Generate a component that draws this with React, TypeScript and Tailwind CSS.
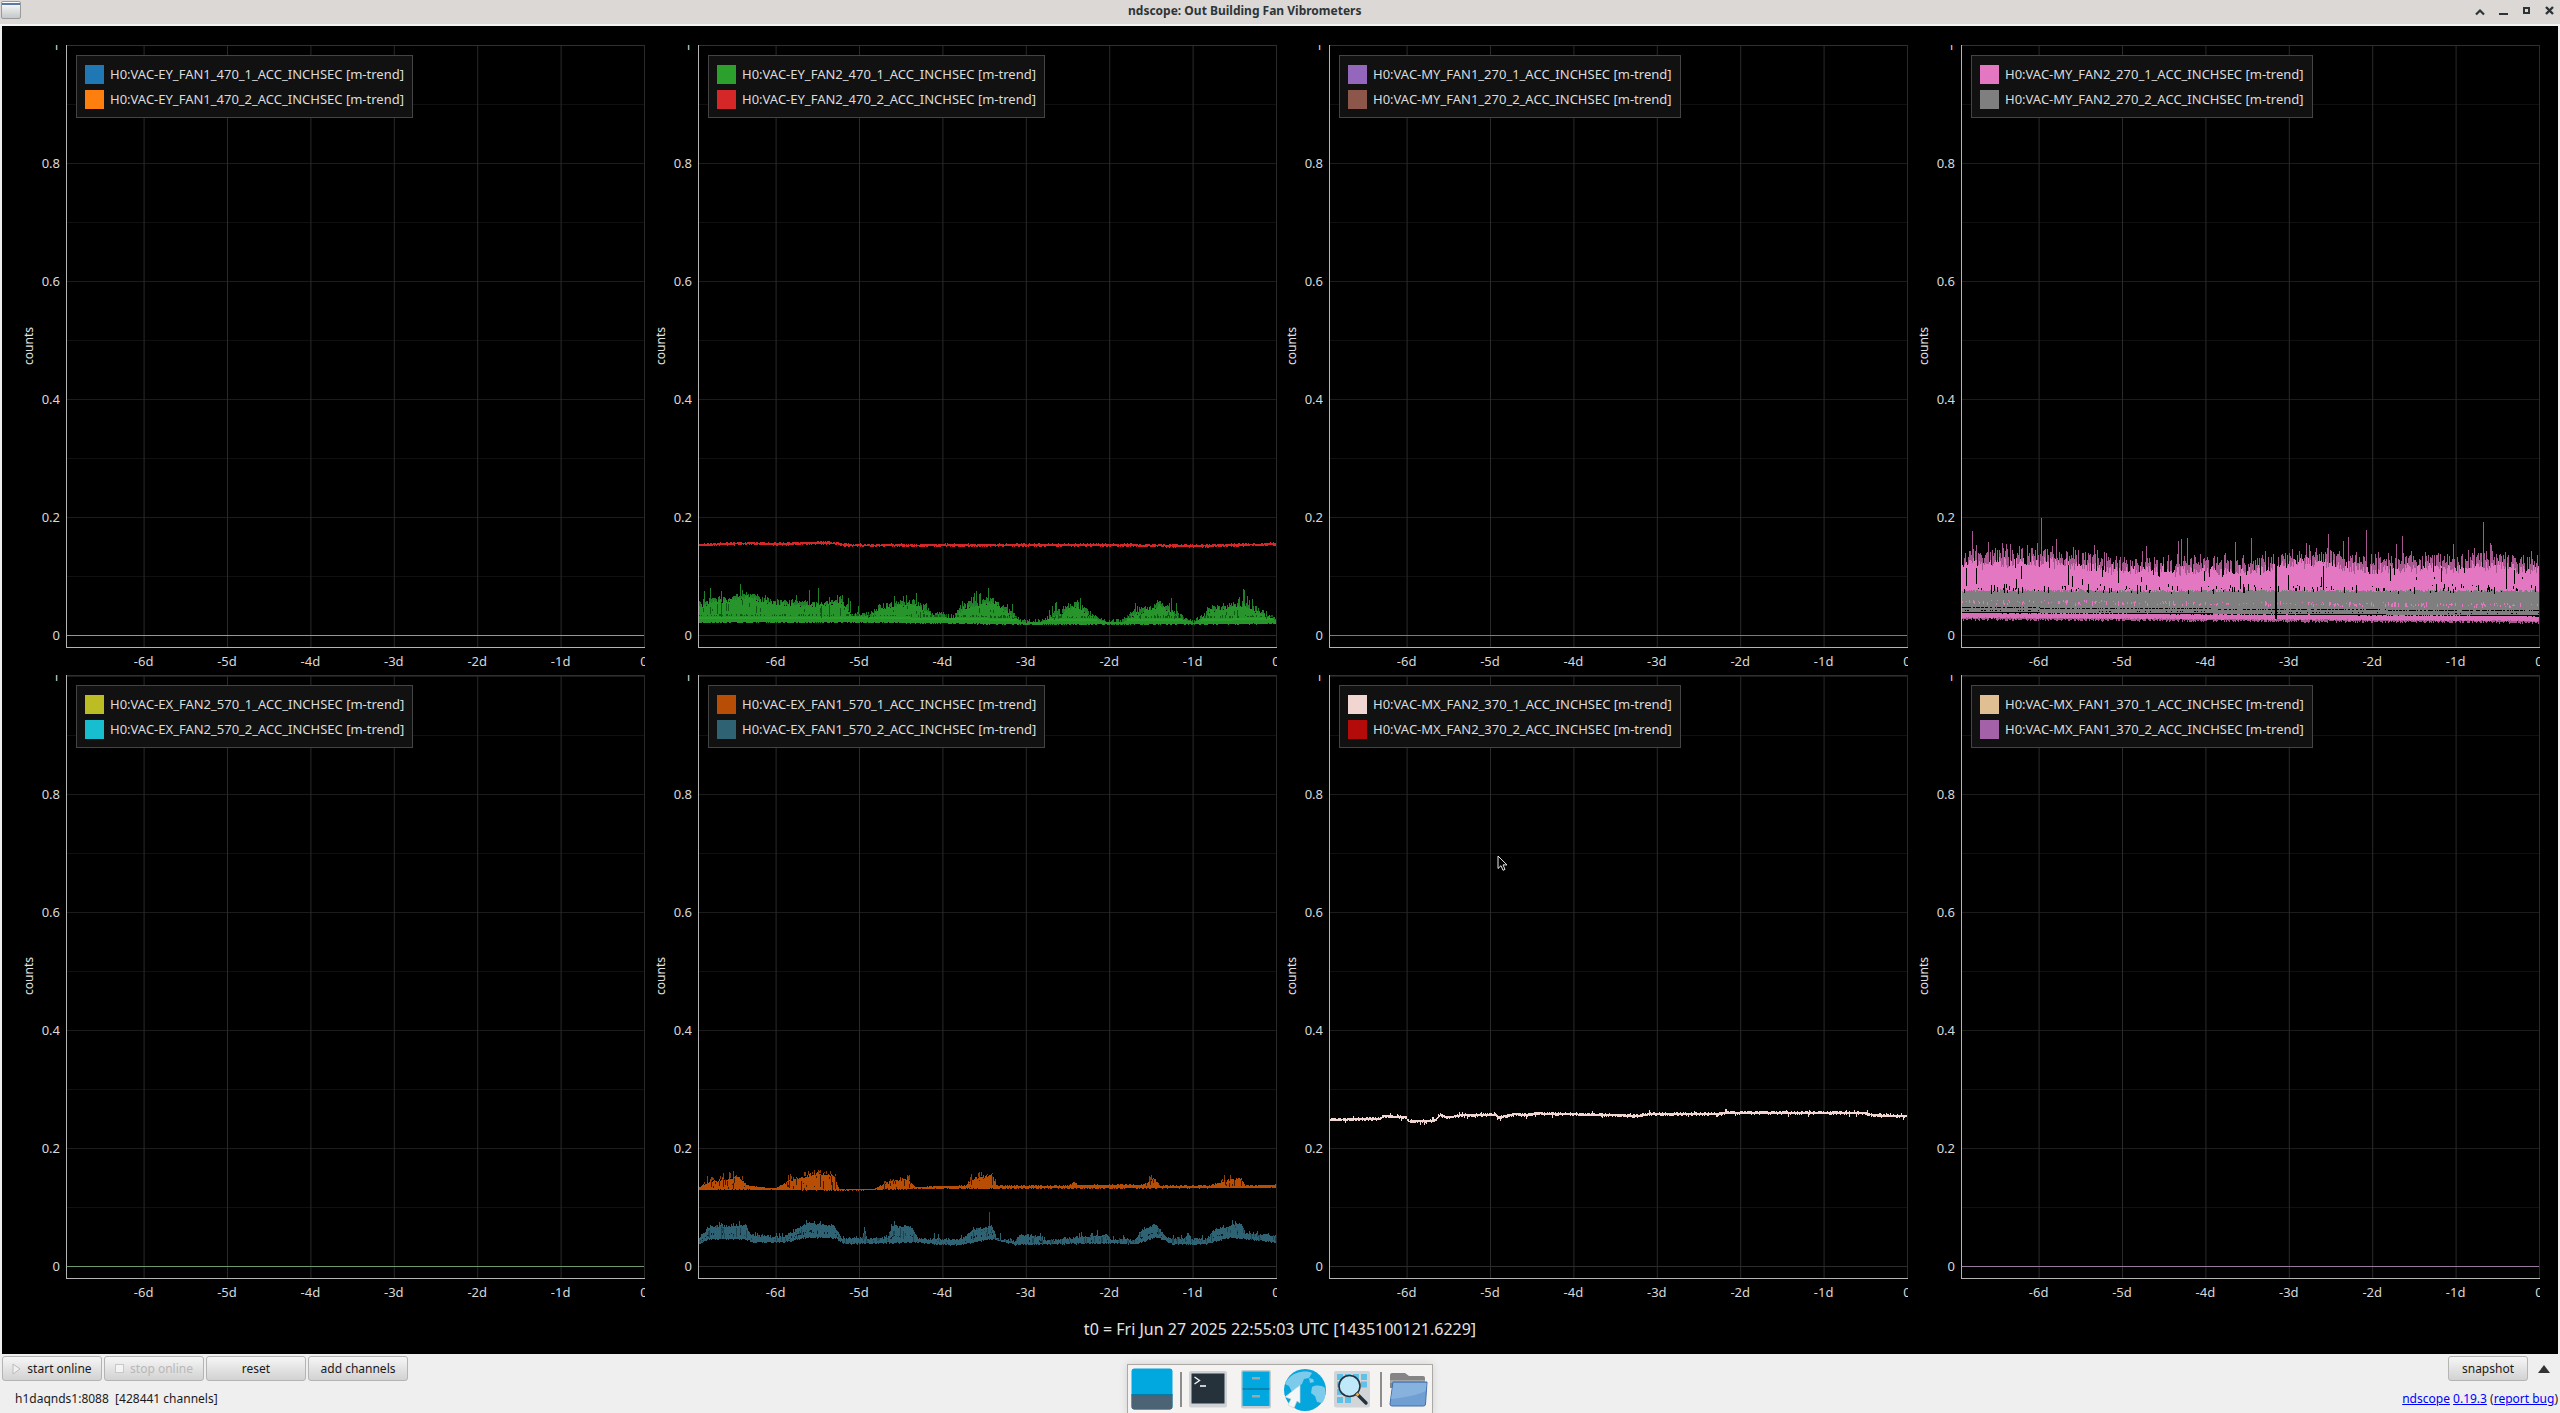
import React from "react";

type P = [number, number];

const rngOf = (seed: number) => () => {
  seed = (seed + 0x6d2b79f5) | 0;
  let t = Math.imul(seed ^ (seed >>> 15), 1 | seed);
  t = (t + Math.imul(t ^ (t >>> 7), 61 | t)) ^ t;
  return ((t ^ (t >>> 14)) >>> 0) / 4294967296;
};

const interp = (pts: P[], x: number) => {
  if (x <= pts[0][0]) return pts[0][1];
  for (let i = 1; i < pts.length; i++) {
    if (x <= pts[i][0]) {
      const [a, b] = pts[i - 1];
      const [c, d] = pts[i];
      return b + ((d - b) * (x - a)) / (c - a || 1);
    }
  }
  return pts[pts.length - 1][1];
};

const W = 578;
const conv = (pts: P[], ox: number, sx: number, oy: number, left: number, top: number): P[] =>
  pts.map(([X, Y]) => [ox + X / sx - left, oy + Y / 3 - top] as P);

const seg = (x: number, a: number, b: number) => `M${x + 0.5} ${a.toFixed(1)}V${b.toFixed(1)}`;

type Layer = { d: string; c: string; w?: number; dash?: string; o?: number };

const greenRed = (): Layer[] => {
  const r = rngOf(11);
  const m = (p: P[]) => conv(p, 650, 2.412, 480, 698, 45);
  const top = m([[115,375],[150,360],[215,350],[235,345],[300,365],[400,370],[460,360],[490,400],[530,405],[560,375],[640,365],[680,400],[730,410],[760,375],[830,360],[880,410],[900,425],[945,425],[970,405],[1030,370],[1070,410],[1100,425],[1140,425],[1160,400],[1230,370],[1290,415],[1310,428],[1330,410],[1350,385],[1430,370],[1500,410],[1512,425]]);
  const low = m([[115,426],[480,426],[700,428],[900,432],[1512,430]]);
  const red = m([[115,195],[220,190],[300,192],[430,188],[480,196],[1100,195],[1320,198],[1512,192]]);
  let g = "", gd = "", k = "", rd = "", br = "";
  for (let x = 0; x < W; x++) {
    const t = interp(top, x), l = interp(low, x);
    const h = l - t;
    const s = h > 6 ? Math.pow(r(), 9) * 14 : 0;
    g += seg(x, t + r() * Math.min(4, h * 0.35), l + r() * 1.2);
    if (r() < 0.7) gd += seg(x, t - r() * 3 - s, t + 3);
    if (h > 6) {
      if (r() < 0.4) k += seg(x, l - 7 - r() * 1.5, l - 6);
      if (r() < 0.1) k += seg(x, t + 3 + r() * (h - 10), t + 4 + r() * (h - 8));
      br += seg(x, l - 5, l - 3);
    }
    const y = interp(red, x);
    rd += seg(x, y - 0.6 - r() * 1.3, y + 0.6 + r() * 1.3);
  }
  return [
    { d: rd, c: "#d62728" },
    { d: gd, c: "#20802a" },
    { d: g, c: "#28942c" },
    { d: br, c: "#2ca02c" },
    { d: k, c: "#0f5a14" },
  ];
};

const pink = (): Layer[] => {
  const r = rngOf(23);
  const Y = (z: number) => 435 + z / 3;
  const X = (z: number) => 1900 + z / 2.376 - 1961;
  const env: P[] = ([[145,232],[320,224],[560,250],[880,250],[900,237],[980,224],[1120,250],[1240,242],[1400,238],[1520,254]] as P[]).map(([a, b]) => [X(a), Y(b)] as P);
  let dim = "", main = "", gray = "", k = "", pd = "", bot = "", botd = "", k2 = "";
  for (let x = 0; x < W; x++) {
    const slope = (x / W) * 10;
    const t = interp(env, x) + (r() - 0.5) * 9;
    const p = Math.pow(r(), 16);
    if (r() < 0.72) dim += seg(x, t - 2 - p * 31 - (r() < 0.18 ? r() * 8 : 0), t + 12);
    main += seg(x, t + 4 + r() * 6, Y(340));
    gray += seg(x, Y(328 + r() * 8), Y(396 + slope));
    if (r() < 0.04) k += seg(x, Y(255 + r() * 45), Y(290 + r() * 40));
    if (r() < 0.25) k += seg(x, Y(312 + r() * 24), Y(316 + r() * 26));
    if (r() < 0.35) pd += seg(x, Y(358 + r() * 12 + slope), Y(361 + r() * 14 + slope));
    if (r() < 0.6) k2 += seg(x, Y(381 + slope), Y(384 + slope));
    if (r() < 0.2) k2 += seg(x, Y(390 + slope), Y(392 + slope));
    bot += seg(x, Y(397 + slope + r() * 3), Y(411 + slope + r() * 4));
    botd += seg(x, Y(409 + slope), Y(414 + slope + r() * 8));
  }
  return [
    { d: dim, c: "#a4588e" },
    { d: main, c: "#e377c2" },
    { d: gray, c: "#7f7f7f" },
    { d: k, c: "#000000" },
    { d: pd, c: "#e377c2" },
    { d: k2, c: "#000000" },
    { d: botd, c: "#a4588e" },
    { d: bot, c: "#d96fb8" },
    { d: `M${X(893)} ${Y(200)}V${Y(417)}`, c: "#000000", w: 1.6 },
  ];
};

const orangeTeal = (): Layer[] => {
  const r = rngOf(37);
  const m = (p: P[]) => conv(p, 650, 2.412, 1130, 698, 675);
  const oT = m([[118,172],[140,150],[215,135],[235,165],[300,175],[340,145],[400,125],[445,130],[455,175],[470,178],[540,175],[570,155],[620,140],[640,170],[760,165],[780,140],[825,130],[835,165],[1010,165],[1020,150],[1030,163],[1190,162],[1215,140],[1230,165],[1350,165],[1380,150],[1425,140],[1435,165],[1512,163]]);
  const oL = m([[118,178],[300,178],[470,180],[540,178],[640,175],[1512,172]]);
  const tT = m([[115,322],[145,285],[230,280],[240,310],[320,318],[380,275],[445,285],[460,320],[510,322],[516,298],[522,322],[570,320],[585,285],[630,285],[645,322],[750,325],[775,295],[825,285],[835,320],[880,330],[890,310],[945,315],[950,328],[1010,320],[1100,310],[1110,325],[1170,325],[1185,295],[1220,280],[1245,320],[1290,322],[1297,305],[1305,322],[1340,325],[1360,295],[1425,275],[1435,305],[1512,315]]);
  const tL = m([[115,340],[145,325],[230,325],[250,335],[320,335],[380,320],[445,322],[470,340],[640,335],[700,342],[750,342],[820,325],[880,342],[1100,338],[1170,340],[1220,320],[1260,340],[1340,340],[1400,320],[1512,335]]);
  let o = "", od = "", ok = "", t = "", td = "", tk = "";
  for (let x = 0; x < W; x++) {
    const a = interp(oT, x), b = interp(oL, x);
    const h = b - a;
    o += seg(x, a + r() * Math.min(3, h * 0.3), b + r());
    if (h > 5 && r() < 0.25) od += seg(x, a - r() * 5, a + 1);
    if (h > 5 && r() < 0.3) ok += seg(x, a + r() * h, a + 1 + r() * h);
    const c = interp(tT, x), d = interp(tL, x);
    t += seg(x, c + r() * 2.5 - (r() < 0.12 ? r() * 5 : 0), d + r() * 1.6);
    if (d - c > 8 && r() < 0.4) tk += seg(x, c + (d - c) * 0.55 + r() * 2, c + (d - c) * 0.55 + 1 + r() * 2);
    if (r() < 0.25) td += seg(x, c + r() * (d - c), c + 1 + r() * (d - c));
  }
  const spx = 650 + 818 / 2.412 - 698;
  return [
    { d: od, c: "#8f3f06" },
    { d: o, c: "#b84e05" },
    { d: ok, c: "#3a1a02" },
    { d: `M${spx} ${1130 + 245 / 3 - 675}V${1130 + 290 / 3 - 675}`, c: "#24505c" },
    { d: t, c: "#2f6272" },
    { d: td, c: "#1f4450" },
    { d: tk, c: "#0a1c22" },
  ];
};

const pale = (): Layer[] => {
  const r = rngOf(51);
  const c = conv([[70,119],[190,116],[197,108],[250,112],[258,124],[320,122],[332,105],[345,112],[390,105],[465,104],[470,113],[510,103],[540,105],[560,100],[700,104],[800,108],[830,102],[1000,102],[1010,98],[1340,99],[1360,105],[1443,109]], 1300, 2.376, 1080, 1329, 675);
  let d = "";
  for (let x = 0; x < W; x++) {
    const y = interp(c, x);
    d += seg(x, y - 0.8 - r() * 1.1 - (r() < 0.04 ? 2 : 0), y + 0.8 + r() * 1.1 + (r() < 0.04 ? 2 : 0));
  }
  return [{ d, c: "#f0d5d0" }];
};

const flat = (y: number, c: string): Layer[] => [{ d: `M0 ${y + 0.5}H${W}`, c, w: 1 }];

const PLOTS = [
  { a: "H0:VAC-EY_FAN1_470_1_ACC_INCHSEC [m-trend]", b: "H0:VAC-EY_FAN1_470_2_ACC_INCHSEC [m-trend]", ca: "#1f77b4", cb: "#ff7f0e", zero: 590, data: flat(590, "#cf8a42") },
  { a: "H0:VAC-EY_FAN2_470_1_ACC_INCHSEC [m-trend]", b: "H0:VAC-EY_FAN2_470_2_ACC_INCHSEC [m-trend]", ca: "#2ca02c", cb: "#d62728", zero: 590, data: greenRed() },
  { a: "H0:VAC-MY_FAN1_270_1_ACC_INCHSEC [m-trend]", b: "H0:VAC-MY_FAN1_270_2_ACC_INCHSEC [m-trend]", ca: "#9467bd", cb: "#8c564b", zero: 590, data: flat(590, "#9c7068") },
  { a: "H0:VAC-MY_FAN2_270_1_ACC_INCHSEC [m-trend]", b: "H0:VAC-MY_FAN2_270_2_ACC_INCHSEC [m-trend]", ca: "#e377c2", cb: "#7f7f7f", zero: 590, data: pink() },
  { a: "H0:VAC-EX_FAN2_570_1_ACC_INCHSEC [m-trend]", b: "H0:VAC-EX_FAN2_570_2_ACC_INCHSEC [m-trend]", ca: "#bcbd22", cb: "#17becf", zero: 591, data: flat(591, "#6f9a70") },
  { a: "H0:VAC-EX_FAN1_570_1_ACC_INCHSEC [m-trend]", b: "H0:VAC-EX_FAN1_570_2_ACC_INCHSEC [m-trend]", ca: "#b84e05", cb: "#2f6272", zero: 591, data: orangeTeal() },
  { a: "H0:VAC-MX_FAN2_370_1_ACC_INCHSEC [m-trend]", b: "H0:VAC-MX_FAN2_370_2_ACC_INCHSEC [m-trend]", ca: "#f0d5d0", cb: "#b30a0a", zero: 591, data: pale() },
  { a: "H0:VAC-MX_FAN1_370_1_ACC_INCHSEC [m-trend]", b: "H0:VAC-MX_FAN1_370_2_ACC_INCHSEC [m-trend]", ca: "#e0bf92", cb: "#a362a8", zero: 591, data: flat(591, "#9a7a9c") },
];

const YT = ["0", "0.2", "0.4", "0.6", "0.8", "1"];
const XT = ["0", "-1d", "-2d", "-3d", "-4d", "-5d", "-6d"];
const STEP = 83.4;

function Plot({ p }: { p: (typeof PLOTS)[number] }) {
  const axis = p.zero + 12;
  return (
    <div className="relative overflow-visible">
      <div className="absolute left-0 top-[19px] h-[604px] w-[58px] overflow-hidden">
        {YT.map((t, i) => (
          <div key={t} className="absolute right-0 h-[18px] text-[13px] leading-[18px] text-[#d8d8d8]" style={{ top: p.zero - i * 118 - 9 }}>
            {t}
          </div>
        ))}
      </div>
      <div className="absolute left-[-3px] top-[310px] flex h-[20px] w-[60px] -rotate-90 items-center justify-center whitespace-nowrap text-[12px] leading-[20px] text-[#e0e0e0]">
        counts
      </div>
      <svg className="absolute left-[64px] top-[19px]" width={W + 1} height={axis + 1}>
        {Array.from({ length: 10 }, (_, i) => i + 1).map((i) => (
          <line key={i} x1={0} x2={W} y1={p.zero - i * 59 + 0.5} y2={p.zero - i * 59 + 0.5} stroke={i % 2 ? "#101010" : "#1c1c1c"} />
        ))}
        <line x1={0} x2={W} y1={p.zero + 0.5} y2={p.zero + 0.5} stroke="#2c2c2c" />
        {XT.map((_, i) => (
          <line key={i} x1={W - i * STEP + 0.5} x2={W - i * STEP + 0.5} y1={0} y2={axis} stroke="#2a2a2a" />
        ))}
        <line x1={0} x2={W} y1={0.5} y2={0.5} stroke="#303030" />
        {p.data.map((l, i) => (
          <path key={i} d={l.d} stroke={l.c} strokeWidth={l.w ?? 1} fill="none" shapeRendering="crispEdges" />
        ))}
        <line x1={0.5} x2={0.5} y1={0} y2={axis + 1} stroke="#b4b4b4" />
        <line x1={0} x2={W + 1} y1={axis + 0.5} y2={axis + 0.5} stroke="#b4b4b4" />
      </svg>
      <div className="absolute left-[74px] top-[29px] flex h-[63px] flex-col justify-center gap-[6px] border border-[#444444] bg-[#111111] px-[8px]">
        {[[p.a, p.ca], [p.b, p.cb]].map(([t, c]) => (
          <div key={t} className="flex h-[19px] items-center gap-[6px] whitespace-nowrap text-[13px] leading-[19px] text-[#dcdcdc]">
            <span className="h-[19px] w-[19px] shrink-0" style={{ background: c }} />
            {t}
          </div>
        ))}
      </div>
      <div className="absolute left-[64px] h-[24px] w-[579px] overflow-hidden" style={{ top: 19 + axis + 2 }}>
        {XT.map((t, i) => (
          <div key={t} className="absolute top-0 w-[40px] text-center text-[13px] leading-[24px] text-[#d8d8d8]" style={{ left: W - i * STEP - 20 }}>
            {t}
          </div>
        ))}
      </div>
    </div>
  );
}

function Btn({ children, disabled, w }: { children: React.ReactNode; disabled?: boolean; w: string }) {
  return (
    <button className={`${w} flex h-[25px] items-center justify-center gap-[6px] rounded-[3px] border border-[#b4b4b4] bg-gradient-to-b from-[#f6f6f6] to-[#d2d2d2] text-[12px] leading-none ${disabled ? "text-[#b8b8b8]" : "text-[#1a1a1a]"}`}>
      {children}
    </button>
  );
}

export default function App() {
  return (
    <div className="relative flex h-[1413px] w-[2560px] flex-col overflow-hidden bg-[#efefef] font-['Noto_Sans',sans-serif]">
      <header className="relative h-[24px] shrink-0 bg-[#dbd8d5]">
        <div className="absolute left-[1px] top-[1px] h-[18px] w-[20px] rounded-[2px] border border-[#9a9a9a] bg-gradient-to-b from-[#ffffff] to-[#c4c8c8]">
          <div className="mt-[1px] h-[2px] bg-[#5878a8]" />
        </div>
        <div className="absolute left-[1128px] top-0 whitespace-nowrap text-[12px] font-bold leading-[21px] text-[#2e3436]">ndscope: Out Building Fan Vibrometers</div>
        <svg className="absolute left-[2470px] top-0" width="90" height="24" fill="none" stroke="#2e3436" strokeWidth="2">
          <path d="M6 14.5l4-4 4 4" strokeWidth="2.2" />
          <path d="M29 14h9" />
          <rect x="54" y="8" width="5" height="5" />
          <path d="M76 7l7 7M83 7l-7 7" strokeWidth="2.4" />
        </svg>
      </header>
      <div className="h-[2px] shrink-0 bg-[#f4f4f4]" />
      <main className="relative mx-[2px] h-[1328px] shrink-0 bg-black">
        <div className="grid grid-cols-[632px_631px_632px_631px] grid-rows-[630px_698px]">
          {PLOTS.map((p) => (
            <Plot key={p.a} p={p} />
          ))}
        </div>
        <div className="absolute left-0 top-[1291px] w-full text-center text-[16px] leading-[24px] text-[#e4e4e4]">t0 = Fri Jun 27 2025 22:55:03 UTC [1435100121.6229]</div>
        <svg className="absolute left-[1495px] top-[829px]" width="14" height="18" viewBox="0 0 14 18">
          <path d="M1 1v12.5l3-2.8 2 4.6 2-.9-2-4.5h4z" fill="#000" stroke="#e8e8e8" strokeWidth="1" />
        </svg>
      </main>
      <footer className="relative flex-1">
        <div className="absolute left-[2px] top-[2px] flex gap-[2px]">
          <Btn w="w-[100px]">
            <svg width="9" height="12" viewBox="0 0 9 12"><path d="M1 1l7 5-7 5z" fill="#f0f0f0" stroke="#bcbcbc" /></svg>
            start online
          </Btn>
          <Btn w="w-[100px]" disabled>
            <svg width="9" height="9" viewBox="0 0 9 9"><rect x="0.5" y="0.5" width="8" height="8" fill="#f4f4f4" stroke="#c8c8c8" /></svg>
            stop online
          </Btn>
          <Btn w="w-[100px]">reset</Btn>
          <Btn w="w-[100px]">add channels</Btn>
        </div>
        <div className="absolute left-[15px] top-[35px] whitespace-pre text-[12px] leading-[20px] text-[#1a1a1a]">h1daqnds1:8088  [428441 channels]</div>

        <div className="absolute left-[1127px] top-[10px] h-[50px] w-[306px] border border-[#aca8a3] bg-[#f5f3f2] shadow-[0_0_8px_rgba(0,0,0,0.12)]">
          <svg className="absolute left-[3px] top-[3px]" width="42" height="42" viewBox="0 0 42 42">
            <rect x="0.5" y="0.5" width="41" height="41" rx="3" fill="#00a8df" />
            <path d="M0.5 27h41v11.5a3 3 0 0 1-3 3h-35a3 3 0 0 1-3-3z" fill="#4b6374" />
            <rect x="0.5" y="26" width="41" height="1.5" fill="#047aa5" />
          </svg>
          <div className="absolute left-[52px] top-[7px] h-[35px] w-[2px] bg-[#8d8d8d]" />
          <svg className="absolute left-[61px] top-[6px]" width="38" height="37" viewBox="0 0 38 37">
            <rect x="0" y="0" width="38" height="36.5" rx="2" fill="#cfd3d6" />
            <rect x="2.5" y="2.5" width="33" height="30" fill="#25323c" />
            <path d="M5.5 6l5 3.5-5 3.5" fill="none" stroke="#f2f4f5" strokeWidth="1.4" />
            <path d="M11 15h6" stroke="#f2f4f5" strokeWidth="1.6" />
          </svg>
          <svg className="absolute left-[113px] top-[5px]" width="30" height="39" viewBox="0 0 30 39">
            <rect x="0" y="0" width="30" height="38.5" rx="2" fill="#c8ccce" />
            <rect x="1.5" y="1.5" width="27" height="17" fill="#00a8df" />
            <rect x="1.5" y="20" width="27" height="16" fill="#00a8df" />
            <rect x="1.5" y="18" width="27" height="2" fill="#0784b0" />
            <rect x="11" y="7" width="8" height="2.5" fill="#9aa8ae" />
            <rect x="11" y="25" width="8" height="2.5" fill="#9aa8ae" />
          </svg>
          <svg className="absolute left-[155px] top-[3px]" width="44" height="44" viewBox="0 0 44 44">
            <circle cx="22" cy="22" r="21" fill="#04a6dd" />
            <path d="M14 5c5-2 12-2 15 0l-3 5-5 1-2 5-5 3-1 6-4-1-3-6-4-2c2-5 6-9 12-11z" fill="#7ccbea" />
            <path d="M29 19c4-2 9-2 13 1 1 6 0 12-3 15l-5-1-2-6-4-3z" fill="#7ccbea" />
            <path d="M26 10l4 1 1 3-4 1z" fill="#7ccbea" />
            <path d="M17 17v18l-3-2-3 7-6-3 3-6-6-2z" fill="#f4f6f7" stroke="#c9d1d5" strokeWidth="0.7" />
          </svg>
          <svg className="absolute left-[206px] top-[6px]" width="36" height="37" viewBox="0 0 36 37">
            <rect x="0" y="0" width="36" height="36.5" rx="2" fill="#d2d5d8" />
            <g fill="#5fc1e8">
              <rect x="3" y="3" width="6" height="6" /><rect x="27" y="3" width="6" height="6" /><rect x="27" y="10.5" width="6" height="6" /><rect x="3" y="10.5" width="6" height="6" /><rect x="3" y="18" width="6" height="6" /><rect x="3" y="26" width="6" height="6" /><rect x="11" y="26" width="6" height="6" />
              <rect x="11" y="3" width="6" height="6" /><rect x="19" y="3" width="6" height="6" />
            </g>
            <circle cx="15.5" cy="15" r="10.5" fill="#bfe8f8" stroke="#24323c" strokeWidth="1.6" />
            <path d="M23 23l9 9" stroke="#24323c" strokeWidth="3.4" strokeLinecap="round" />
            <path d="M22.5 22.5l2 2" stroke="#e8b040" strokeWidth="2.6" />
          </svg>
          <div className="absolute left-[252px] top-[7px] h-[35px] w-[2px] bg-[#8d8d8d]" />
          <svg className="absolute left-[261px] top-[7px]" width="40" height="36" viewBox="0 0 40 36">
            <path d="M1 3a2 2 0 0 1 2-2h13l4 3h14a2 2 0 0 1 2 2v10H1z" fill="#858585" />
            <path d="M1 8h35v3H1z" fill="#a5a5a5" />
            <path d="M4 10h34l-1.5 22a2 2 0 0 1-2 2H3a2 2 0 0 1-2-2z" fill="#6f9fd3" stroke="#3f6fa8" strokeWidth="1" />
            <path d="M4.5 11h33l-.6 8C26 24 12 26 2 27z" fill="#88b2de" />
          </svg>
        </div>

        <div className="absolute left-[2448px] top-[2px]">
          <Btn w="w-[80px]">snapshot</Btn>
        </div>
        <svg className="absolute left-[2538px] top-[11px]" width="12" height="8" viewBox="0 0 12 8"><path d="M6 0l6 8H0z" fill="#333333" /></svg>
        <div className="absolute right-[2px] top-[35px] whitespace-pre text-[12px] leading-[20px] text-[#1a1a1a]">
          <a className="text-[#0000ff] underline">ndscope</a> <a className="text-[#0000ff] underline">0.19.3</a> (<a className="text-[#0000ff] underline">report bug</a>)
        </div>
      </footer>
    </div>
  );
}
